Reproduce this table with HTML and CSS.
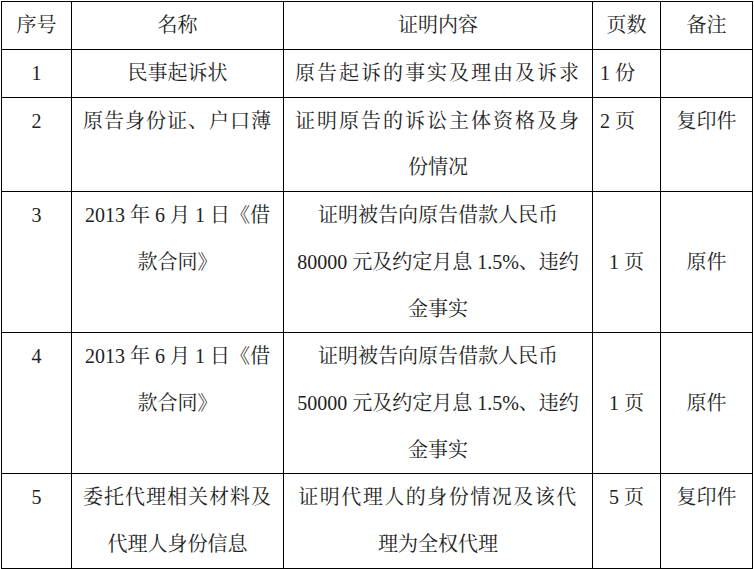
FILE: index.html
```html
<!DOCTYPE html>
<html lang="zh-CN">
<head>
<meta charset="utf-8">
<title>证据清单</title>
<link rel="stylesheet" href="styles.css">
</head>
<body>
<table class="evidence">
  <colgroup>
    <col class="c-no">
    <col class="c-name">
    <col class="c-content">
    <col class="c-pages">
    <col class="c-note">
  </colgroup>
  <tr class="head">
    <td>序号</td>
    <td>名称</td>
    <td>证明内容</td>
    <td>页数</td>
    <td>备注</td>
  </tr>
  <tr>
    <td>1</td>
    <td>民事起诉状</td>
    <td><span class="spread">原告起诉的事实及理由及诉求</span></td>
    <td class="left">1 份</td>
    <td></td>
  </tr>
  <tr>
    <td>2</td>
    <td><span class="spread-s">原告身份证、户口薄</span></td>
    <td><span class="spread">证明原告的诉讼主体资格及身</span><br>份情况</td>
    <td class="left">2 页</td>
    <td>复印件</td>
  </tr>
  <tr>
    <td>3</td>
    <td>2013 年 6 月 1 日《借<br>款合同》</td>
    <td>证明被告向原告借款人民币<br>80000 元及约定月息 1.5%、违约<br>金事实</td>
    <td class="mid">1 页</td>
    <td class="mid">原件</td>
  </tr>
  <tr>
    <td>4</td>
    <td>2013 年 6 月 1 日《借<br>款合同》</td>
    <td>证明被告向原告借款人民币<br>50000 元及约定月息 1.5%、违约<br>金事实</td>
    <td class="mid">1 页</td>
    <td class="mid">原件</td>
  </tr>
  <tr>
    <td>5</td>
    <td><span class="spread-s">委托代理相关材料及</span><br>代理人身份信息</td>
    <td><span class="spread-m">证明代理人的身份情况及该代</span><br>理为全权代理</td>
    <td>5 页</td>
    <td>复印件</td>
  </tr>
</table>
</body>
</html>
```

FILE: styles.css
```css
html, body {
  margin: 0;
  padding: 0;
  background: #fff;
}

body {
  padding: 1px 0 0 1px;
}

.evidence {
  border-collapse: collapse;
  table-layout: fixed;
  width: 751px;
  font-family: "Liberation Serif", "Noto Serif CJK SC", "Noto Sans CJK SC", serif;
  font-size: 20px;
  color: #222;
}

.c-no { width: 70px; }
.c-name { width: 212px; }
.c-content { width: 309px; }
.c-pages { width: 68px; }
.c-note { width: 92px; }

.evidence td {
  border: 1px solid #000;
  padding: 0;
  line-height: 46.7px;
  text-align: center;
  vertical-align: top;
  white-space: nowrap;
  overflow: hidden;
}

.evidence .head td {
  line-height: 47px;
}

.evidence td.left {
  text-align: left;
  padding-left: 7px;
}

.evidence td.mid {
  vertical-align: middle;
}

.spread {
  letter-spacing: 2px;
}

.spread-m {
  letter-spacing: 1.5px;
}

.spread-s {
  letter-spacing: 1px;
}
```
